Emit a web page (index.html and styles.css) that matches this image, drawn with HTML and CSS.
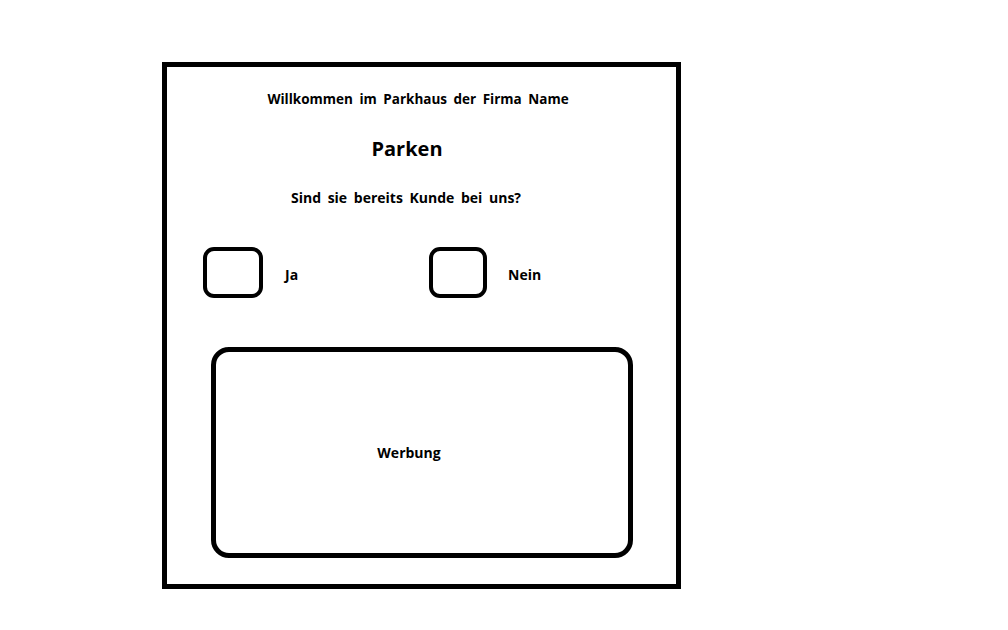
FILE: index.html
```html
<!DOCTYPE html>
<html lang="de">
<head>
<meta charset="utf-8">
<title>Parkhaus</title>
<link rel="stylesheet" href="styles.css">
</head>
<body>
<div class="frame">
  <div class="title">Willkommen im Parkhaus der Firma Name</div>
  <div class="heading">Parken</div>
  <div class="question">Sind sie bereits Kunde bei uns?</div>
  <div class="options">
    <label class="option option-ja">
      <span class="checkbox"></span>
      <span class="option-label">Ja</span>
    </label>
    <label class="option option-nein">
      <span class="checkbox checkbox-nein"></span>
      <span class="option-label">Nein</span>
    </label>
  </div>
  <div class="ad">
    <span class="ad-label">Werbung</span>
  </div>
</div>
</body>
</html>
```

FILE: styles.css
```css
html, body {
  margin: 0;
  padding: 0;
  background: #ffffff;
}

body {
  font-family: "Open Sans", "DejaVu Sans", sans-serif;
  font-weight: 700;
  color: #000000;
  padding-top: 62px;
  padding-left: 162px;
}

.frame {
  box-sizing: border-box;
  width: 519px;
  height: 527px;
  border: 5px solid #000;
  display: flex;
  flex-direction: column;
  padding-top: 22px;
}

.title {
  font-size: 13.5px;
  line-height: 20px;
  text-align: center;
  word-spacing: 3px;
  padding-right: 7px;
}

.heading {
  font-size: 20px;
  line-height: 30px;
  text-align: center;
  margin-top: 25px;
  padding-right: 29px;
}

.question {
  font-size: 14px;
  line-height: 20px;
  text-align: center;
  word-spacing: 3px;
  margin-top: 24px;
  padding-right: 31px;
}

.options {
  display: flex;
  margin-top: 39px;
  padding-left: 36px;
}

.option {
  display: flex;
  align-items: center;
}

.option-ja {
  width: 226px;
  gap: 22px;
}

.option-nein {
  gap: 21px;
}

.checkbox {
  box-sizing: border-box;
  width: 60px;
  height: 51px;
  border: 4px solid #000;
  border-radius: 11px;
}

.checkbox-nein {
  width: 58px;
}

.option-label {
  font-size: 14px;
  padding-top: 4px;
}

.ad {
  box-sizing: border-box;
  margin-top: 49px;
  margin-left: 44px;
  width: 422px;
  height: 211px;
  border: 5px solid #000;
  border-radius: 18px;
  display: flex;
  align-items: center;
  justify-content: center;
  padding-right: 26px;
}

.ad-label {
  font-size: 14px;
}
```
